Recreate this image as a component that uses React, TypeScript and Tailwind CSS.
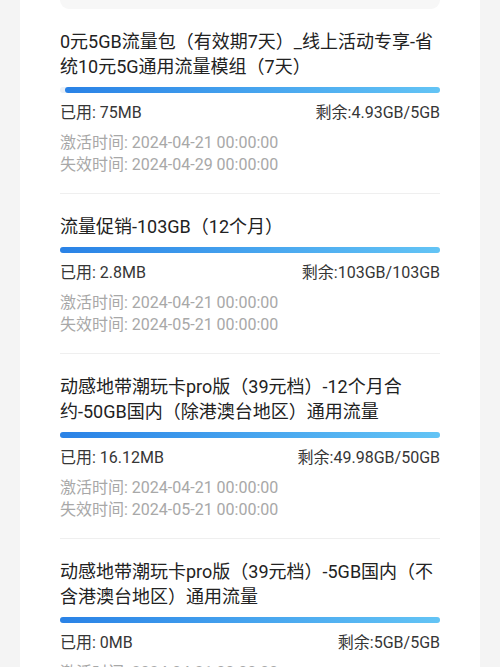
const packs = [
  {
    name: "0元5GB流量包（有效期7天）_线上活动专享-省统10元5G通用流量模组（7天）",
    used: "75MB",
    left: "4.93GB/5GB",
    pct: 98.6,
    start: "2024-04-21 00:00:00",
    end: "2024-04-29 00:00:00",
  },
  {
    name: "流量促销-103GB（12个月）",
    used: "2.8MB",
    left: "103GB/103GB",
    pct: 100,
    start: "2024-04-21 00:00:00",
    end: "2024-05-21 00:00:00",
  },
  {
    name: "动感地带潮玩卡pro版（39元档）-12个月合约-50GB国内（除港澳台地区）通用流量",
    used: "16.12MB",
    left: "49.98GB/50GB",
    pct: 99.9,
    start: "2024-04-21 00:00:00",
    end: "2024-05-21 00:00:00",
  },
  {
    name: "动感地带潮玩卡pro版（39元档）-5GB国内（不含港澳台地区）通用流量",
    used: "0MB",
    left: "5GB/5GB",
    pct: 100,
    start: "2024-04-21 00:00:00",
    end: "2024-05-21 00:00:00",
  },
];

export default function App() {
  return (
    <div
      className="min-h-screen bg-[#f4f4f4] px-5"
      style={{ fontFamily: 'Roboto, "Noto Sans CJK SC", sans-serif' }}
    >
      <div className="bg-white px-10 min-h-screen">
        {/* tail of the block above */}
        <div className="h-[9px] rounded-b-xl bg-[#f7f7f7]" />

        {packs.map((p, i) => (
          <div key={i} className="pt-5 pb-[17px] border-b border-[#efefef]">
            <div className="text-[18px] leading-[25px] text-[#222]">{p.name}</div>

            {/* remaining bar */}
            <div className="mt-2 h-[6px] rounded-full bg-[#eaf0f7] flex justify-end">
              <div
                className="h-full rounded-full bg-gradient-to-r from-[#2a82e6] to-[#63c4f5]"
                style={{ width: `${p.pct}%` }}
              />
            </div>

            <div className="mt-[9px] flex justify-between text-[16px] leading-[22px] text-[#363636]">
              <span>已用: {p.used}</span>
              <span>剩余:{p.left}</span>
            </div>

            <div className="mt-2 text-[16px] leading-[22px] text-[#a8a8a8]">
              <div>激活时间: {p.start}</div>
              <div>失效时间: {p.end}</div>
            </div>
          </div>
        ))}
      </div>
    </div>
  );
}
